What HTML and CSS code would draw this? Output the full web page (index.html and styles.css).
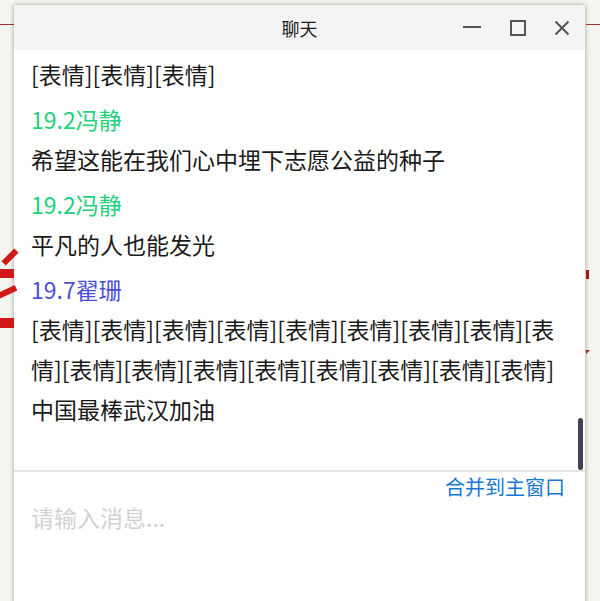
FILE: index.html
```
<!DOCTYPE html>
<html lang="zh">
<head>
<meta charset="utf-8">
<title>聊天</title>
<link rel="stylesheet" href="styles.css">
</head>
<body>
<div class="desktop">
  <div class="deco-line deco-line-left"></div>
  <div class="deco-line deco-line-right"></div>
  <div class="deco-red deco-slash1"></div>
  <div class="deco-red deco-bar1"></div>
  <div class="deco-red deco-slash2"></div>
  <div class="deco-red deco-bar2"></div>
  <div class="deco-red deco-square"></div>
  <div class="deco-tri"></div>

  <div class="window">
    <div class="titlebar">
      <div class="title">聊天</div>
      <div class="controls">
        <svg class="ctl ctl-min" width="20" height="20" viewBox="0 0 20 20"><line x1="1" y1="10" x2="19" y2="10" stroke="#555" stroke-width="2"/></svg>
        <svg class="ctl ctl-max" width="16" height="16" viewBox="0 0 16 16"><rect x="1" y="1" width="14" height="14" fill="none" stroke="#555" stroke-width="2"/></svg>
        <svg class="ctl ctl-close" width="16" height="16" viewBox="0 0 16 16"><path d="M1.5 1.5 L14.5 14.5 M14.5 1.5 L1.5 14.5" stroke="#555" stroke-width="2" fill="none"/></svg>
      </div>
    </div>
    <div class="messages">
      <div class="msg">[表情][表情][表情]</div>
      <div class="name green">19.2冯静</div>
      <div class="msg">希望这能在我们心中埋下志愿公益的种子</div>
      <div class="name green">19.2冯静</div>
      <div class="msg">平凡的人也能发光</div>
      <div class="name blue">19.7翟珊</div>
      <div class="msg">[表情][表情][表情][表情][表情][表情][表情][表情][表情][表情][表情][表情][表情][表情][表情][表情][表情]</div>
      <div class="msg">中国最棒武汉加油</div>
      <div class="scrollthumb"></div>
    </div>
    <div class="composer">
      <div class="merge-row"><a class="merge-link">合并到主窗口</a></div>
      <div class="placeholder">请输入消息...</div>
    </div>
  </div>
</div>
</body>
</html>
```
FILE: styles.css
```
* { box-sizing: border-box; }
html, body { margin: 0; padding: 0; }
body {
  width: 600px;
  height: 601px;
  overflow: hidden;
  background: #f7f5f0;
  font-family: "Noto Sans CJK SC", "Noto Sans", sans-serif;
}
.desktop {
  position: relative;
  width: 600px;
  height: 601px;
  padding: 5px 15px 0 14px;
}
.deco-line {
  position: absolute;
  top: 24px;
  height: 1px;
  background: #a83030;
}
.deco-line-left { left: 0; width: 14px; }
.deco-line-right { left: 586px; width: 14px; }
.deco-red { position: absolute; background: #d01818; }
.deco-slash1 { left: 1px; top: 254px; width: 18px; height: 6px; transform: rotate(-45deg); }
.deco-bar1 { left: 0; top: 269px; width: 14px; height: 9px; }
.deco-slash2 { left: -3px; top: 289px; width: 20px; height: 6px; transform: rotate(-25deg); }
.deco-bar2 { left: 0; top: 318px; width: 14px; height: 10px; }
.deco-square { left: 586px; top: 270px; width: 3px; height: 9px; background: #a01818; }
.deco-tri {
  position: absolute;
  left: 586px;
  top: 350px;
  width: 0; height: 0;
  border-left: 4px solid #a01818;
  border-bottom: 4px solid transparent;
}
.window {
  width: 571px;
  height: 620px;
  background: #ffffff;
  box-shadow: 0 0 5px rgba(0,0,0,0.35);
  display: flex;
  flex-direction: column;
}
.titlebar {
  height: 45px;
  background: #f4f4f4;
  position: relative;
  display: flex;
  align-items: center;
  justify-content: center;
}
.title {
  font-size: 18px;
  color: #1a1a1a;
  line-height: 24px;
}
.controls {
  position: absolute;
  right: 15px;
  top: 0;
  height: 45px;
  display: flex;
  align-items: center;
  gap: 28px;
}
.ctl { display: block; }
.ctl-min { width: 20px; margin-top: -1px; }
.messages {
  position: relative;
  height: 420px;
  padding: 4px 14px 0 17px;
  overflow: hidden;
  font-size: 23px;
  color: #1a1a1a;
  line-height: 40px;
}
.name { margin-top: 5px; }
.green { color: #1fd07c; }
.blue { color: #4b4fd6; }
.scrollthumb {
  position: absolute;
  right: 2px;
  top: 368px;
  width: 5px;
  height: 52px;
  border-radius: 3px;
  background: #41425a;
}
.composer {
  border-top: 2px solid #e3e3e3;
  padding: 1px 20px 0 17px;
  flex: 1;
}
.merge-row {
  display: flex;
  justify-content: flex-end;
  line-height: 28px;
}
.merge-link {
  font-size: 20px;
  color: #1677d4;
  cursor: pointer;
}
.placeholder {
  font-size: 23px;
  line-height: 32px;
  color: #d2d2d2;
}
```
